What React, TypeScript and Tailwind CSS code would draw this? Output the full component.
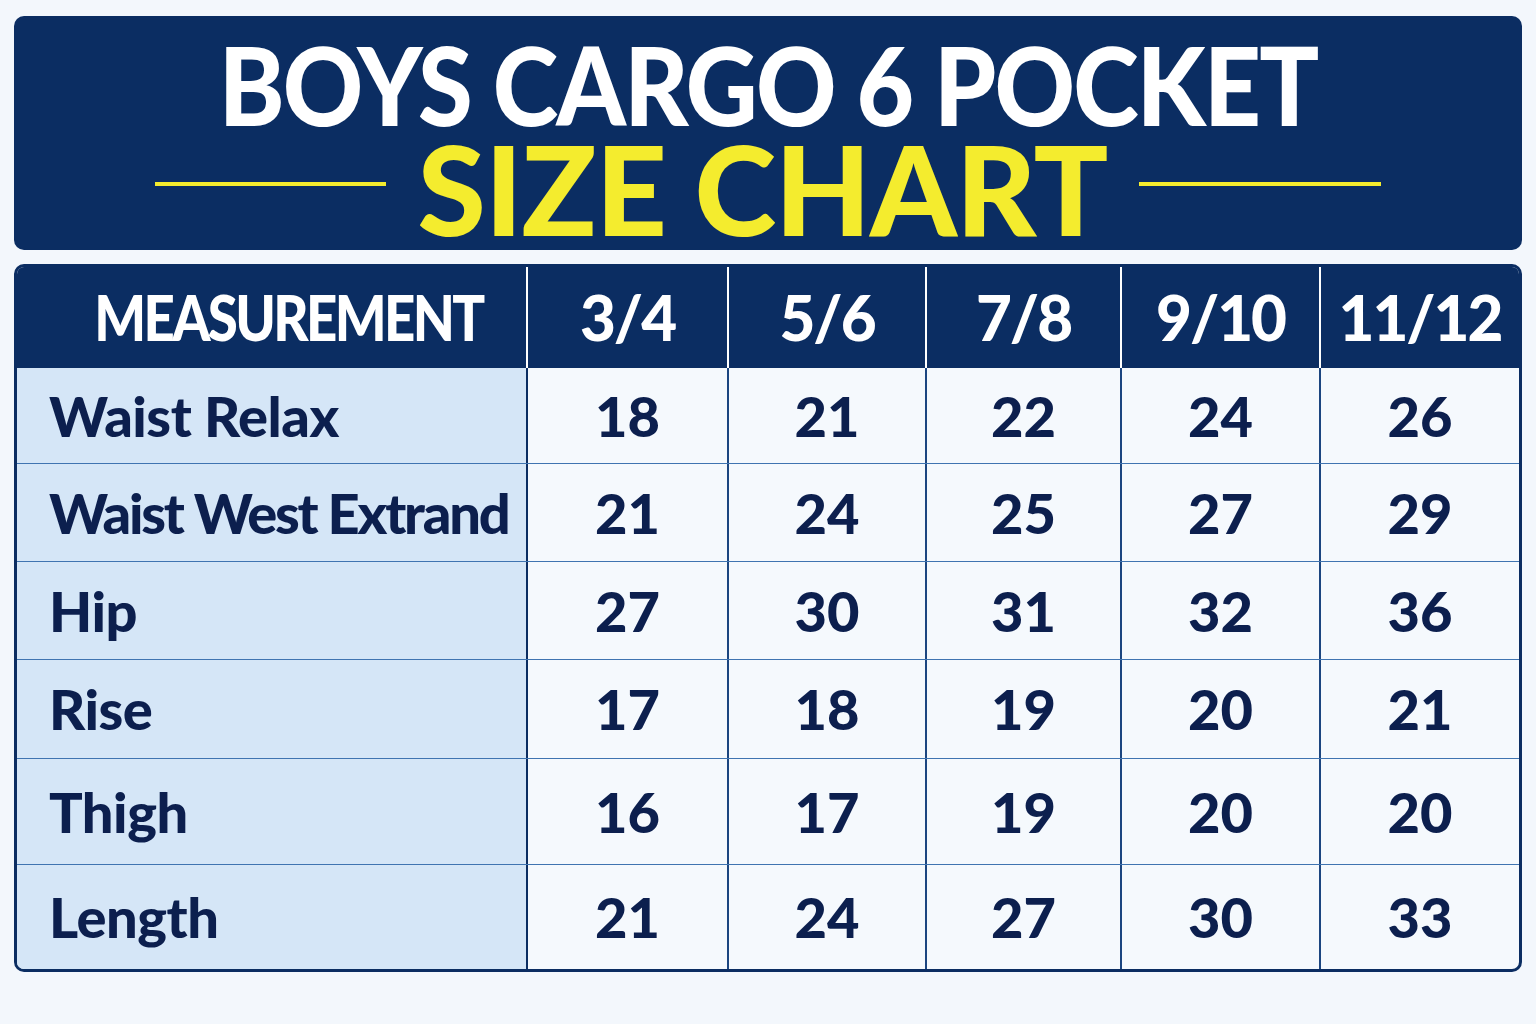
const sizes = ["3/4", "5/6", "7/8", "9/10", "11/12"];

const rows: { label: string; values: number[]; h: string; tight?: boolean }[] = [
  { label: "Waist Relax", values: [18, 21, 22, 24, 26], h: "h-[96px]" },
  { label: "Waist West Extrand", values: [21, 24, 25, 27, 29], h: "h-[98px]", tight: true },
  { label: "Hip", values: [27, 30, 31, 32, 36], h: "h-[98px]" },
  { label: "Rise", values: [17, 18, 19, 20, 21], h: "h-[99px]" },
  { label: "Thigh", values: [16, 17, 19, 20, 20], h: "h-[106px]" },
  { label: "Length", values: [21, 24, 27, 30, 33], h: "h-[104px]" },
];

export default function App() {
  return (
    <div
      className="w-[1536px] h-[1024px] bg-[#f3f7fc] px-[14px] pt-[16px] flex flex-col gap-[14px]"
      style={{ fontFamily: "Lato, 'Noto Sans', sans-serif" }}
    >
      {/* Title banner */}
      <div className="h-[234px] rounded-[10px] bg-[#0b2d62] flex flex-col items-center pt-[23px]">
        <h1 className="text-[108px] leading-[90px] font-black text-white tracking-[-2px] whitespace-nowrap scale-x-[0.92]">
          BOYS CARGO 6 POCKET
        </h1>
        <div className="flex items-center gap-[32px] mt-[9px]">
          <div className="w-[231px] h-[4px] mb-[8px] bg-[#f4ec2e]" />
          <span className="text-[124px] leading-[100px] font-black text-[#f4ec2e] tracking-[-1px] whitespace-nowrap">
            SIZE CHART
          </span>
          <div className="w-[242px] h-[4px] mb-[8px] bg-[#f4ec2e]" />
        </div>
      </div>

      {/* Size table */}
      <div className="rounded-[10px] border-[3px] border-[#0b2d62] overflow-hidden bg-[#f5f9fd]">
        <div className="grid grid-cols-[511px_201px_198px_195px_199px_1fr] h-[101px] bg-[#0b2d62]">
          <div className="flex items-center justify-center border-r-2 border-white">
            <span className="text-[62px] font-black text-white tracking-[-3px] inline-block scale-x-[0.88] pl-[38px] whitespace-nowrap">
              MEASUREMENT
            </span>
          </div>
          {sizes.map((s, i) => (
            <div
              key={s}
              className={
                i < sizes.length - 1
                  ? "flex items-center justify-center border-r-2 border-white"
                  : "flex items-center justify-center"
              }
            >
              <span className="text-[62px] font-black text-white tracking-[-2px]">{s}</span>
            </div>
          ))}
        </div>

        {rows.map((row, r) => (
          <div
            key={row.label}
            className={
              "grid grid-cols-[511px_201px_198px_195px_199px_1fr] " +
              row.h +
              (r < rows.length - 1 ? " border-b-[1.5px] border-[#3f74b1]" : "")
            }
          >
            <div className="bg-[#d5e6f7] border-r-2 border-[#0b2d62] flex items-center pl-[32px]">
              <span
                className={
                  row.tight
                    ? "text-[56px] font-black text-[#0c1f4e] tracking-[-2.2px] whitespace-nowrap"
                    : "text-[56px] font-black text-[#0c1f4e] tracking-[-0.5px] whitespace-nowrap"
                }
              >
                {row.label}
              </span>
            </div>
            {row.values.map((v, i) => (
              <div
                key={i}
                className={
                  i < row.values.length - 1
                    ? "flex items-center justify-center border-r-2 border-[#1b4580]"
                    : "flex items-center justify-center"
                }
              >
                <span className="text-[56px] font-black text-[#0c1f4e]">{v}</span>
              </div>
            ))}
          </div>
        ))}
      </div>
    </div>
  );
}
